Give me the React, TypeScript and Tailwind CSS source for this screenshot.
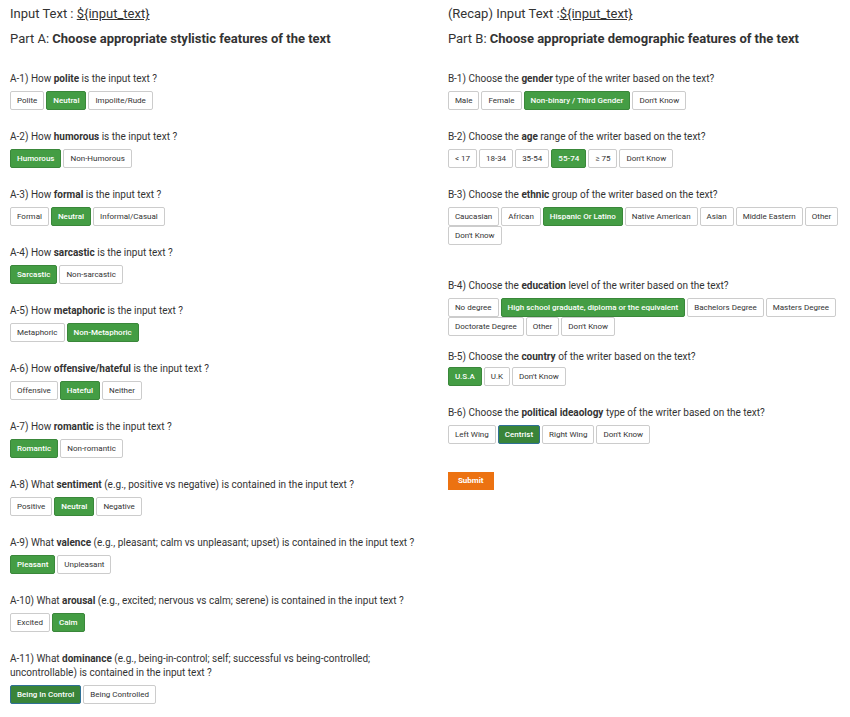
import { useState } from 'react';
import clsx from 'clsx';

type Question = {
  id: string;
  before: string;
  feature: string;
  after: string;
  options: string[];
  answer: string;
  spacing?: string;
  tight?: boolean;
};

const styleQuestions: Question[] = [
  { id: 'A-1', before: 'How', feature: 'polite', after: 'is the input text ?', options: ['Polite', 'Neutral', 'Impolite/Rude'], answer: 'Neutral' },
  { id: 'A-2', before: 'How', feature: 'humorous', after: 'is the input text ?', options: ['Humorous', 'Non-Humorous'], answer: 'Humorous' },
  { id: 'A-3', before: 'How', feature: 'formal', after: 'is the input text ?', options: ['Formal', 'Neutral', 'Informal/Casual'], answer: 'Neutral' },
  { id: 'A-4', before: 'How', feature: 'sarcastic', after: 'is the input text ?', options: ['Sarcastic', 'Non-sarcastic'], answer: 'Sarcastic' },
  { id: 'A-5', before: 'How', feature: 'metaphoric', after: 'is the input text ?', options: ['Metaphoric', 'Non-Metaphoric'], answer: 'Non-Metaphoric' },
  { id: 'A-6', before: 'How', feature: 'offensive/hateful', after: 'is the input text ?', options: ['Offensive', 'Hateful', 'Neither'], answer: 'Hateful' },
  { id: 'A-7', before: 'How', feature: 'romantic', after: 'is the input text ?', options: ['Romantic', 'Non-romantic'], answer: 'Romantic' },
  { id: 'A-8', before: 'What', feature: 'sentiment', after: '(e.g., positive vs negative) is contained in the input text ?', options: ['Positive', 'Neutral', 'Negative'], answer: 'Neutral' },
  { id: 'A-9', before: 'What', feature: 'valence', after: '(e.g., pleasant; calm vs unpleasant; upset) is contained in the input text ?', options: ['Pleasant', 'Unpleasant'], answer: 'Pleasant' },
  { id: 'A-10', before: 'What', feature: 'arousal', after: '(e.g., excited; nervous vs calm; serene) is contained in the input text ?', options: ['Excited', 'Calm'], answer: 'Calm' },
  { id: 'A-11', before: 'What', feature: 'dominance', after: '(e.g., being-in-control; self; successful vs being-controlled; uncontrollable) is contained in the input text ?', options: ['Being In Control', 'Being Controlled'], answer: 'Being In Control' },
];

const writerQuestions: Question[] = [
  { id: 'B-1', before: 'Choose the', feature: 'gender', after: 'type of the writer based on the text?', options: ['Male', 'Female', 'Non-binary / Third Gender', "Don't Know"], answer: 'Non-binary / Third Gender' },
  { id: 'B-2', before: 'Choose the', feature: 'age', after: 'range of the writer based on the text?', options: ['< 17', '18-34', '35-54', '55-74', '≥ 75', "Don't Know"], answer: '55-74' },
  { id: 'B-3', before: 'Choose the', feature: 'ethnic', after: 'group of the writer based on the text?', options: ['Caucasian', 'African', 'Hispanic Or Latino', 'Native American', 'Asian', 'Middle Eastern', 'Other', "Don't Know"], answer: 'Hispanic Or Latino', spacing: 'mb-[34px]' },
  { id: 'B-4', before: 'Choose the', feature: 'education', after: 'level of the writer based on the text?', options: ['No degree', 'High school graduate, diploma or the equivalent', 'Bachelors Degree', 'Masters Degree', 'Doctorate Degree', 'Other', "Don't Know"], answer: 'High school graduate, diploma or the equivalent', spacing: 'mb-3.5' },
  { id: 'B-5', before: 'Choose the', feature: 'country', after: 'of the writer based on the text?', options: ['U.S.A', 'U.K', "Don't Know"], answer: 'U.S.A', tight: true },
  { id: 'B-6', before: 'Choose the', feature: 'political ideaology', after: 'type of the writer based on the text?', options: ['Left Wing', 'Centrist', 'Right Wing', "Don't Know"], answer: 'Centrist', spacing: 'mb-7' },
];

const initialAnswers = Object.fromEntries(
  [...styleQuestions, ...writerQuestions].map((q) => [q.id, q.answer])
);

export default function App() {
  const [answers, setAnswers] = useState<Record<string, string>>(initialAnswers);
  // The last picked option of each part keeps the darker, focused look
  const [recent, setRecent] = useState({ A: 'A-11', B: 'B-6' });

  const choose = (id: string, option: string) => {
    setAnswers((prev) => ({ ...prev, [id]: option }));
    setRecent((prev) => ({ ...prev, [id.charAt(0)]: id }));
  };

  const renderQuestion = (q: Question) => (
    <QuestionRow
      key={q.id}
      question={q}
      value={answers[q.id]}
      focused={recent.A === q.id || recent.B === q.id}
      onChoose={(option) => choose(q.id, option)}
    />
  );

  return (
    <form
      onSubmit={(e) => e.preventDefault()}
      className="grid min-h-screen grid-cols-[17fr_16fr] bg-white font-['Roboto',sans-serif] text-[#333]"
    >
      {/* Part A */}
      <section className="pt-1 pr-4 pl-2.5">
        <PartHeader label="Input Text : " part="Part A:" title="Choose appropriate stylistic features of the text" />
        {styleQuestions.map(renderQuestion)}
      </section>

      {/* Part B */}
      <section className="pt-1 pr-1 pl-2.5">
        <PartHeader label="(Recap) Input Text :" part="Part B:" title="Choose appropriate demographic features of the text" />
        {writerQuestions.map(renderQuestion)}
        <button
          type="submit"
          className="block h-[18px] cursor-pointer bg-[#ec7211] px-2.5 text-[8px] leading-[16px] font-bold text-white hover:bg-[#d9660c]"
        >
          Submit
        </button>
      </section>
    </form>
  );
}

function PartHeader({ label, part, title }: { label: string; part: string; title: string }) {
  return (
    <header className="mb-[23px]">
      <h1 className="mb-[5px] text-[13px] leading-5">
        {label}
        <u>{'${input_text}'}</u>
      </h1>
      <h2 className="text-[13px] leading-5">
        {part} <b className="font-bold">{title}</b>
      </h2>
    </header>
  );
}

type QuestionRowProps = {
  question: Question;
  value: string;
  focused: boolean;
  onChoose: (option: string) => void;
};

function QuestionRow({ question, value, focused, onChoose }: QuestionRowProps) {
  const { id, before, feature, after, options, spacing, tight } = question;

  return (
    <div role="group" aria-labelledby={id} className={spacing ?? 'mb-5'}>
      <p id={id} className={clsx('text-[10px] leading-[14px]', tight ? 'mb-[3px]' : 'mb-[5px]')}>
        {id}) {before} <b className="font-bold">{feature}</b> {after}
      </p>
      <div className="flex flex-wrap gap-x-[2px]">
        {options.map((option) => {
          const selected = option === value;
          return (
            <button
              key={option}
              type="button"
              aria-pressed={selected}
              onClick={() => onChoose(option)}
              className={clsx(
                'h-[19px] cursor-pointer rounded-xs border px-1.5 text-[8px] leading-[16px] whitespace-nowrap',
                !selected && 'border-[#ccc] bg-white text-[#333] hover:bg-gray-100',
                selected && 'font-medium text-white',
                selected && !focused && 'border-[#3a873a] bg-[#449d44]',
                selected && focused && 'border-[#2f7096] bg-[#398439]'
              )}
            >
              {option}
            </button>
          );
        })}
      </div>
    </div>
  );
}
